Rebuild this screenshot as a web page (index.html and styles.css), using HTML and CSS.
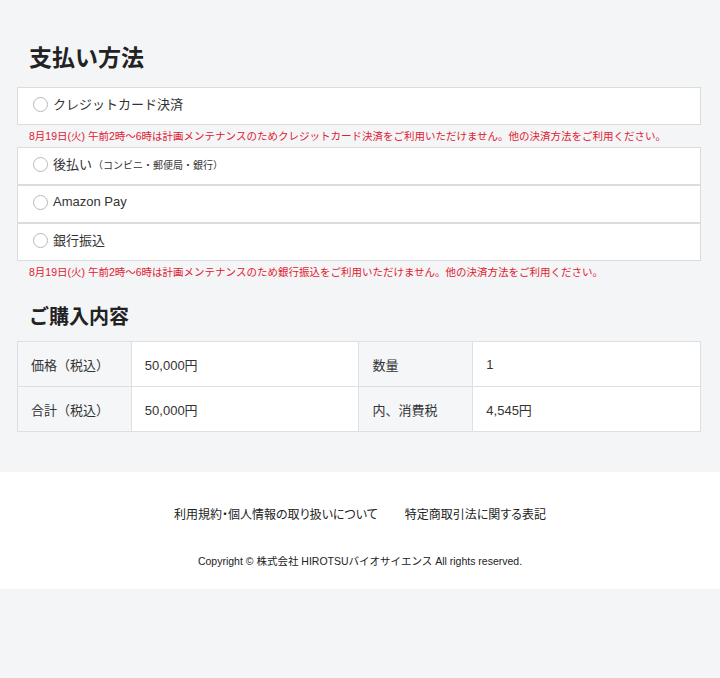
FILE: index.html
```html
<!DOCTYPE html>
<html lang="ja">
<head>
<meta charset="utf-8">
<title>支払い方法</title>
<link rel="stylesheet" href="styles.css">
</head>
<body>
<main class="main">
  <h1 class="title">支払い方法</h1>
  <div class="group">
    <label class="option"><input type="radio" name="pay" class="radio"><span>クレジットカード決済</span></label>
  </div>
  <p class="note">8月19日(火) 午前2時〜6時は計画メンテナンスのためクレジットカード決済をご利用いただけません。他の決済方法をご利用ください。</p>
  <div class="group">
    <label class="option"><input type="radio" name="pay" class="radio"><span>後払い<small class="sub">（コンビニ・郵便局・銀行）</small></span></label>
    <label class="option"><input type="radio" name="pay" class="radio"><span>Amazon Pay</span></label>
    <label class="option"><input type="radio" name="pay" class="radio"><span>銀行振込</span></label>
  </div>
  <p class="note">8月19日(火) 午前2時〜6時は計画メンテナンスのため銀行振込をご利用いただけません。他の決済方法をご利用ください。</p>

  <h2 class="subtitle">ご購入内容</h2>
  <table class="summary">
    <colgroup>
      <col class="col-label">
      <col class="col-value">
      <col class="col-label">
      <col class="col-value">
    </colgroup>
    <tr>
      <th class="label">価格（税込）</th>
      <td class="value">50,000円</td>
      <th class="label">数量</th>
      <td class="value">1</td>
    </tr>
    <tr>
      <th class="label">合計（税込）</th>
      <td class="value">50,000円</td>
      <th class="label">内、消費税</th>
      <td class="value">4,545円</td>
    </tr>
  </table>
</main>
<footer class="footer">
  <nav class="links">
    <a href="#" class="link">利用規約・個人情報の取り扱いについて</a>
    <a href="#" class="link">特定商取引法に関する表記</a>
  </nav>
  <p class="copy">Copyright © 株式会社 HIROTSUバイオサイエンス All rights reserved.</p>
</footer>
</body>
</html>
```
FILE: styles.css
```css
html, body {
  margin: 0;
  padding: 0;
}
body {
  background: #f4f5f7;
  color: #333;
  font-family: "Liberation Sans", "Noto Sans CJK JP", sans-serif;
}
.main {
  padding: 44px 19px 40px 17px;
}
.title {
  margin: 0 0 15px 0;
  padding-left: 12px;
  font-size: 23px;
  line-height: 28px;
  font-weight: bold;
  color: #222;
}
.group {
  display: flex;
  flex-direction: column;
}
.option {
  display: flex;
  align-items: center;
  gap: 5px;
  height: 36px;
  box-sizing: content-box;
  padding-left: 15px;
  background: #fff;
  border: 1px solid #dcdcdc;
  font-size: 13px;
  color: #333;
  cursor: pointer;
}
.option span {
  position: relative;
  top: -3px;
}
.radio {
  appearance: none;
  -webkit-appearance: none;
  margin: 0;
  width: 15px;
  height: 15px;
  border: 1px solid #b9b9b9;
  border-radius: 50%;
  background: #fff;
  box-sizing: border-box;
  position: relative;
  top: -2px;
}
.sub {
  font-size: 10px;
  margin-left: 1px;
}
.note {
  margin: 0;
  padding-left: 12px;
  height: 22px;
  line-height: 22px;
  font-size: 10.5px;
  color: #e0202e;
  white-space: nowrap;
}
.subtitle {
  margin: 20px 0 10px 0;
  padding-left: 12px;
  font-size: 20px;
  line-height: 28px;
  font-weight: bold;
  color: #222;
}
.summary {
  width: 100%;
  border-collapse: collapse;
  table-layout: fixed;
  background: #fff;
  font-size: 13px;
}
.col-label {
  width: 16.67%;
}
.col-value {
  width: 33.33%;
}
.summary th,
.summary td {
  height: 44px;
  padding: 0 13px;
  border: 1px solid #dcdfe3;
  text-align: left;
  font-weight: normal;
  color: #333;
}
.label {
  background: #f5f6f8;
}
.footer {
  background: #fff;
  padding: 35px 0 21px;
  text-align: center;
}
.links {
  display: flex;
  justify-content: center;
  gap: 27px;
  font-size: 12px;
  line-height: 16px;
  font-feature-settings: "palt";
}
.link {
  color: #222;
  text-decoration: none;
}
.copy {
  margin: 31px 0 0 0;
  font-size: 10.5px;
  line-height: 14px;
  color: #222;
}
```
